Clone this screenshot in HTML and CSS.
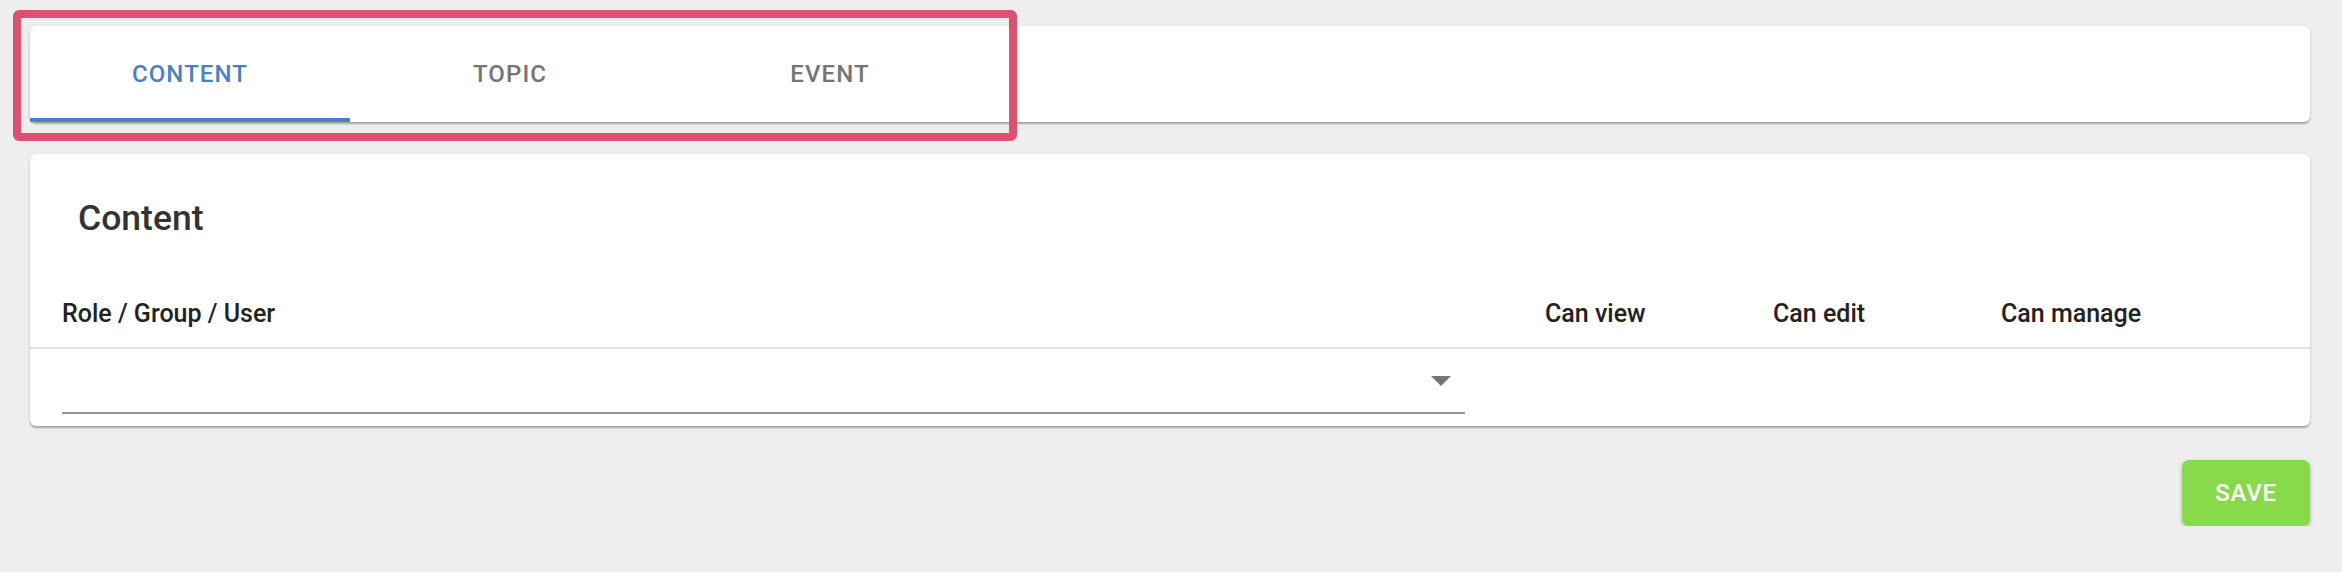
FILE: index.html
```html
<!DOCTYPE html>
<html lang="en">
<head>
    <meta charset="UTF-8">
    <title>Permissions</title>
    <link rel="stylesheet" href="styles.css">
</head>
<body>

<!-- Tabs -->
<div class="card tab-bar">
    <div class="tab active">Content</div>
    <div class="tab">Topic</div>
    <div class="tab">Event</div>
</div>

<!-- Highlight box around the tabs -->
<div class="highlight"></div>

<!-- Permissions table -->
<div class="card perm-card">
    <h2 class="perm-title">Content</h2>
    <div class="perm-row perm-head">
        <div>Role / Group / User</div>
        <div>Can view</div>
        <div>Can edit</div>
        <div>Can manage</div>
    </div>
    <div class="perm-row">
        <div class="select">
            <svg width="20" height="10" viewBox="0 0 20 10"><polygon points="0,0 20,0 10,10" fill="#757575"/></svg>
        </div>
        <div></div>
        <div></div>
        <div></div>
    </div>
</div>

<div class="actions">
    <button class="save-btn">Save</button>
</div>

</body>
</html>
```

FILE: styles.css
```css
body {
    margin: 0;
    padding: 26px 32px 0 30px;
    background-color: #eeeeee;
    font-family: Roboto, "Liberation Sans", sans-serif;
    color: #222;
}

.card {
    background-color: #fff;
    border-radius: 6px;
    box-shadow: 0 2px 2px rgba(0, 0, 0, 0.3), 0 0 2px rgba(0, 0, 0, 0.08);
}

/* Tabs */
.tab-bar {
    display: flex;
    height: 96px;
    margin-bottom: 32px;
}

.tab {
    width: 320px;
    display: flex;
    align-items: center;
    justify-content: center;
    font-size: 24px;
    font-weight: 500;
    letter-spacing: 1.1px;
    text-transform: uppercase;
    color: #757575;
}

.tab.active {
    color: #4a81c4;
    box-shadow: inset 0 -4px 0 #4a81c4;
}

.highlight {
    position: absolute;
    left: 13px;
    top: 10px;
    width: 988px;
    height: 115px;
    border: 8px solid #dd5071;
    border-radius: 6px;
}

/* Permissions card */
.perm-card {
    padding-top: 46px;
}

.perm-title {
    margin: 0;
    padding-left: 48px;
    font-size: 35.5px;
    line-height: 36px;
    font-weight: 500;
    color: #333;
}

.perm-row {
    display: grid;
    grid-template-columns: 1fr 228px 228px 228px;
    padding: 0 81px 0 32px;
}

.perm-head {
    padding-top: 65px;
    padding-bottom: 21px;
    border-bottom: 2px solid #e0e0e0;
    font-size: 25px;
    line-height: 25px;
    font-weight: 500;
    color: #222;
}

.select {
    height: 63px;
    margin-right: 80px;
    margin-bottom: 12px;
    padding-right: 14px;
    border-bottom: 2px solid #949494;
    display: flex;
    align-items: center;
    justify-content: flex-end;
}

.actions {
    display: flex;
    justify-content: flex-end;
    margin-top: 34px;
}

.save-btn {
    width: 128px;
    height: 66px;
    border: none;
    border-radius: 7px;
    background-color: #89da4a;
    color: #fff;
    font-family: Roboto, "Liberation Sans", sans-serif;
    font-size: 24px;
    font-weight: 500;
    letter-spacing: 0.8px;
    text-transform: uppercase;
    box-shadow: 0 2px 4px rgba(0, 0, 0, 0.25);
}
```
